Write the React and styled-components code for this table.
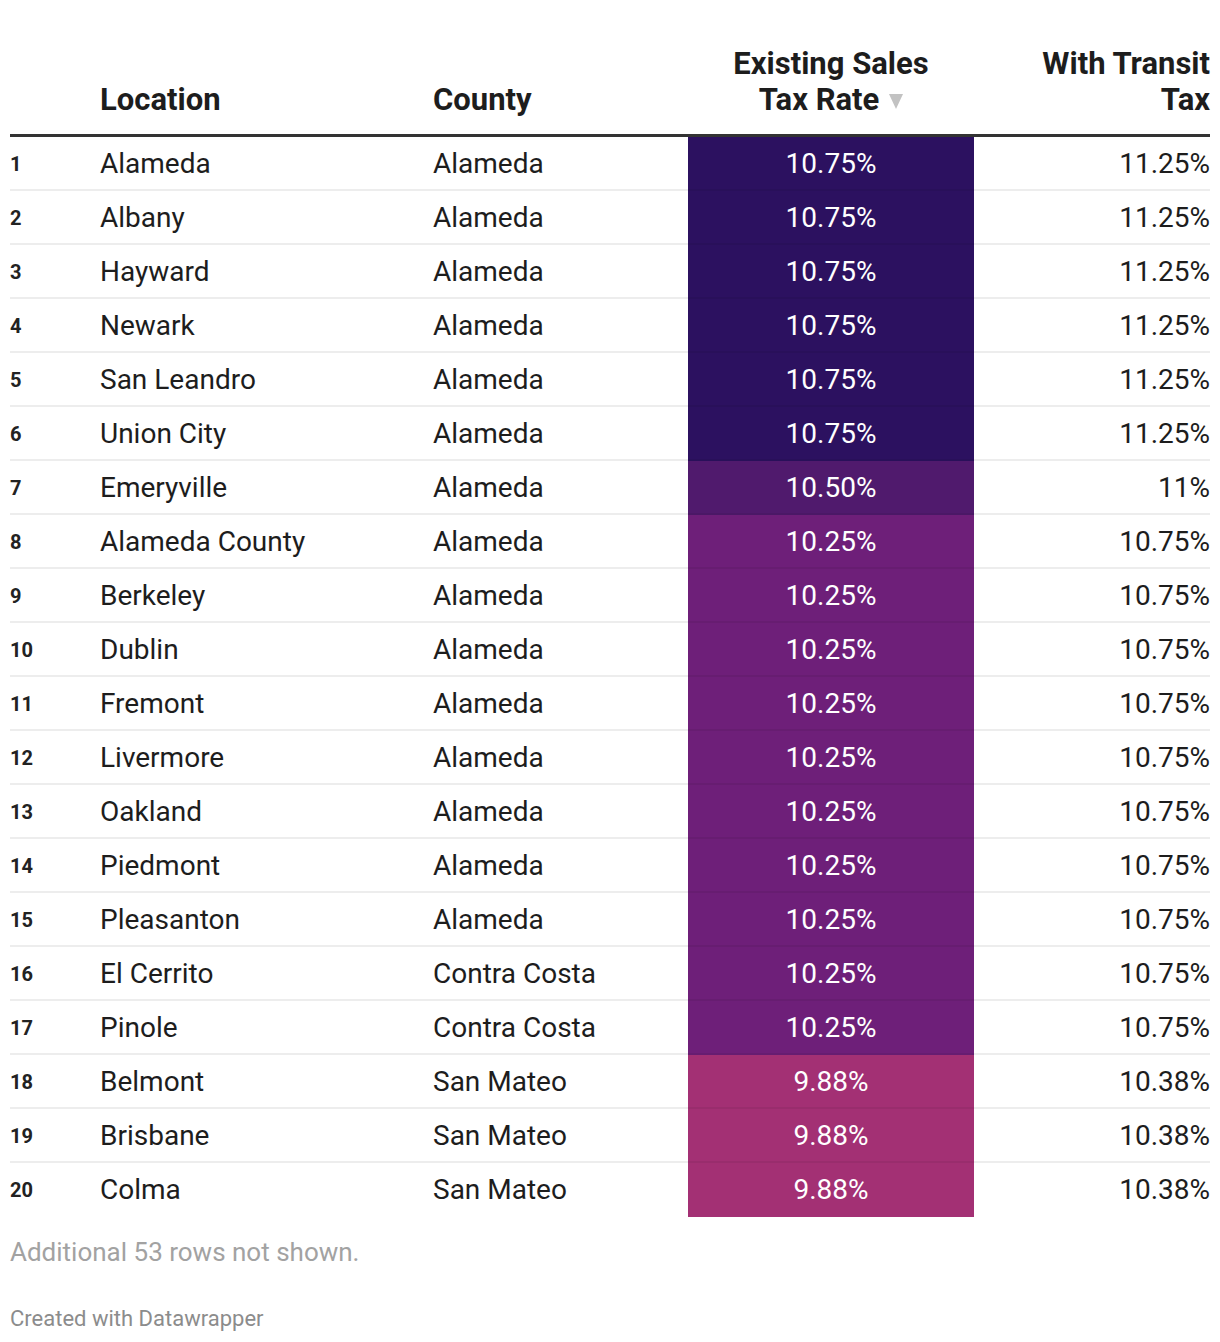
import React from 'react';
import styled, { createGlobalStyle } from 'styled-components';

const GlobalStyle = createGlobalStyle`
  body {
    margin: 0;
    background: #ffffff;
    font-family: Roboto, "Liberation Sans", sans-serif;
    color: #1d1d1d;
  }
`;

const Page = styled.div`
  padding: 46px 10px 0;
  width: 1200px;
`;

const Grid = styled.div`
  display: grid;
  grid-template-columns: 90px 333px 255px 286px 236px;
`;

const HeadCell = styled.div`
  display: flex;
  align-items: flex-end;
  justify-content: ${(p) => p.$align || 'flex-start'};
  text-align: ${(p) => (p.$align === 'center' ? 'center' : p.$align === 'flex-end' ? 'right' : 'left')};
  padding-bottom: 16px;
  border-bottom: 3px solid #333333;
  font-size: 31px;
  line-height: 36px;
  font-weight: 700;
  color: #1d1d1d;
`;

const SortArrow = styled.span`
  display: inline-block;
  margin-left: 10px;
  width: 0;
  height: 0;
  border-left: 7px solid transparent;
  border-right: 7px solid transparent;
  border-top: 15px solid #c2c2c2;
  vertical-align: 1px;
`;

const Cell = styled.div`
  box-sizing: border-box;
  height: 54px;
  padding-top: 1px;
  display: flex;
  align-items: center;
  justify-content: ${(p) => p.$align || 'flex-start'};
  font-size: 28px;
  border-bottom: 2px solid ${(p) => (p.$last ? 'transparent' : '#ededed')};
`;

const Rank = styled(Cell)`
  font-size: 20px;
  font-weight: 700;
  color: #222222;
`;

const HeatCell = styled(Cell)`
  background: ${(p) => p.$bg};
  color: #ffffff;
  border-bottom-color: ${(p) => (p.$last ? p.$bg : 'rgba(0, 0, 0, 0.06)')};
`;

const Note = styled.div`
  margin-top: 20px;
  font-size: 26px;
  line-height: 30px;
  color: #a2a2a2;
`;

const Credit = styled.div`
  margin-top: 39px;
  font-size: 22px;
  line-height: 26px;
  color: #8c8c8c;
`;

const heat = {
  '10.75%': '#2c1160',
  '10.50%': '#501a6d',
  '10.25%': '#6e1f79',
  '9.88%': '#a33074',
};

const rows = [
  ['Alameda', 'Alameda', '10.75%', '11.25%'],
  ['Albany', 'Alameda', '10.75%', '11.25%'],
  ['Hayward', 'Alameda', '10.75%', '11.25%'],
  ['Newark', 'Alameda', '10.75%', '11.25%'],
  ['San Leandro', 'Alameda', '10.75%', '11.25%'],
  ['Union City', 'Alameda', '10.75%', '11.25%'],
  ['Emeryville', 'Alameda', '10.50%', '11%'],
  ['Alameda County', 'Alameda', '10.25%', '10.75%'],
  ['Berkeley', 'Alameda', '10.25%', '10.75%'],
  ['Dublin', 'Alameda', '10.25%', '10.75%'],
  ['Fremont', 'Alameda', '10.25%', '10.75%'],
  ['Livermore', 'Alameda', '10.25%', '10.75%'],
  ['Oakland', 'Alameda', '10.25%', '10.75%'],
  ['Piedmont', 'Alameda', '10.25%', '10.75%'],
  ['Pleasanton', 'Alameda', '10.25%', '10.75%'],
  ['El Cerrito', 'Contra Costa', '10.25%', '10.75%'],
  ['Pinole', 'Contra Costa', '10.25%', '10.75%'],
  ['Belmont', 'San Mateo', '9.88%', '10.38%'],
  ['Brisbane', 'San Mateo', '9.88%', '10.38%'],
  ['Colma', 'San Mateo', '9.88%', '10.38%'],
];

const App = () => {
  return (
    <>
      <GlobalStyle />
      <Page>
        <Grid>
          <HeadCell />
          <HeadCell>Location</HeadCell>
          <HeadCell>County</HeadCell>
          <HeadCell $align="center">
            <div>
              Existing Sales
              <br />
              Tax Rate
              <SortArrow />
            </div>
          </HeadCell>
          <HeadCell $align="flex-end">
            <div>
              With Transit
              <br />
              Tax
            </div>
          </HeadCell>

          {rows.map((r, i) => {
            const last = i === rows.length - 1;
            return (
              <React.Fragment key={r[0]}>
                <Rank $last={last}>{i + 1}</Rank>
                <Cell $last={last}>{r[0]}</Cell>
                <Cell $last={last}>{r[1]}</Cell>
                <HeatCell $last={last} $align="center" $bg={heat[r[2]]}>
                  {r[2]}
                </HeatCell>
                <Cell $last={last} $align="flex-end">
                  {r[3]}
                </Cell>
              </React.Fragment>
            );
          })}
        </Grid>
        <Note>Additional 53 rows not shown.</Note>
        <Credit>Created with Datawrapper</Credit>
      </Page>
    </>
  );
};

export default App;
